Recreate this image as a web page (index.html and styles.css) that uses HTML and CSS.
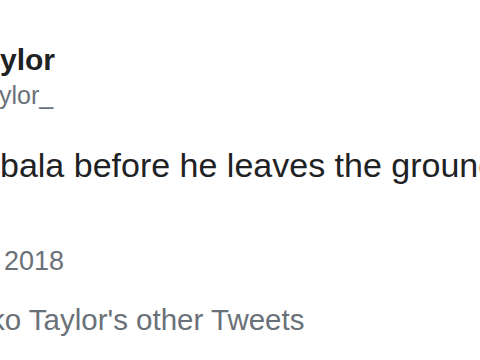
FILE: index.html
```html
<!DOCTYPE html>
<html lang="en">
<head>
    <meta charset="UTF-8">
    <meta name="viewport" content="width=device-width, initial-scale=1.0">
    <title>Tweet</title>
    <link rel="stylesheet" href="styles.css">
</head>
<body>
    <div class="tweet">
        <div class="author">
            <p class="name">ylor</p>
            <p class="handle">ylor_</p>
        </div>

        <p class="text">bala before he leaves the ground</p>

        <p class="date">2018</p>

        <p class="more">ko Taylor's other Tweets</p>
    </div>
</body>
</html>
```

FILE: styles.css
```css
body {
    margin: 0;
    overflow: hidden;
    background-color: #ffffff;
    font-family: "Liberation Sans", Arial, sans-serif;
    color: #1f2224;
}

p {
    margin: 0;
}

.tweet {
    padding-top: 42px;
    white-space: nowrap;
}

.name {
    font-size: 30px;
    font-weight: bold;
    line-height: 36px;
}

.handle {
    margin-top: 1px;
    margin-left: -1px;
    font-size: 25px;
    line-height: 32px;
    color: #6b7178;
}

.text {
    margin-top: 32px;
    font-size: 34px;
    line-height: 44px;
}

.date {
    margin-top: 57px;
    padding-left: 4px;
    font-size: 27px;
    line-height: 34px;
    color: #6b7178;
}

.more {
    margin-top: 25px;
    margin-left: -10px;
    font-size: 29.5px;
    line-height: 34px;
    color: #6b7178;
}
```
